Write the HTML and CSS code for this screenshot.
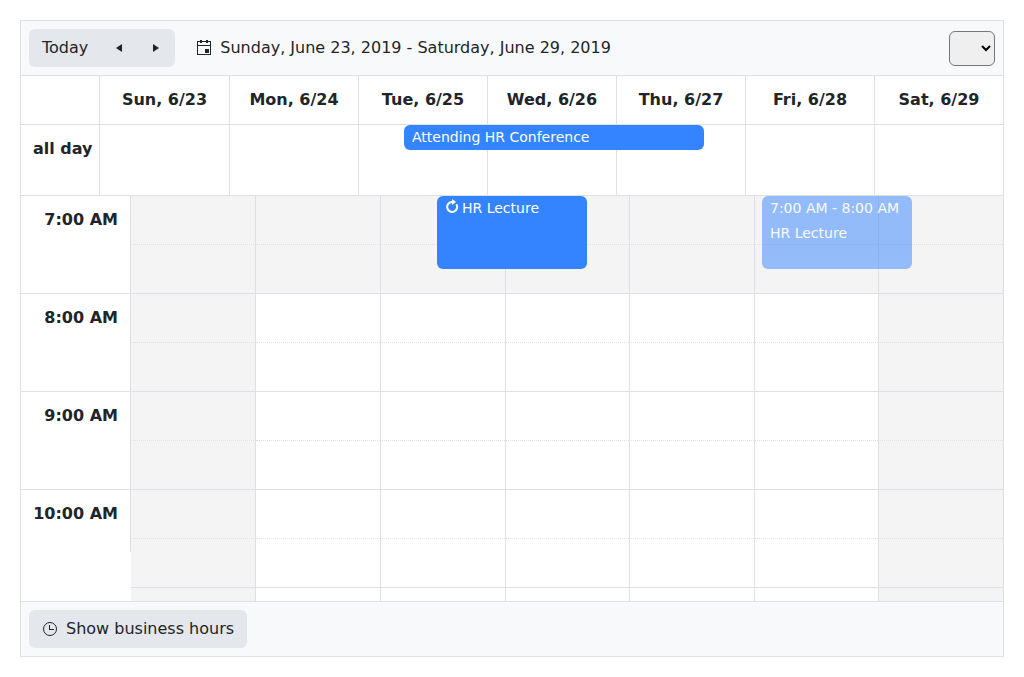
FILE: index.html
```html
<!DOCTYPE html>
<html lang="en">
<head>
<meta charset="utf-8">
<meta name="viewport" content="width=device-width, initial-scale=1">
<title>Scheduler</title>
<link rel="stylesheet" href="styles.css">
</head>
<body>
<main class="scheduler">
  <header class="toolbar">
    <div class="button-group">
      <button class="button" type="button">Today</button>
      <button class="button icon-button" type="button" aria-label="Previous week">
        <svg class="icon" viewBox="0 0 16 16" aria-hidden="true"><path d="M11 4v8L5 8z"/></svg>
      </button>
      <button class="button icon-button" type="button" aria-label="Next week">
        <svg class="icon" viewBox="0 0 16 16" aria-hidden="true"><path d="M5 4v8l6-4z"/></svg>
      </button>
    </div>
    <button class="button date-range" type="button">
      <svg class="icon" viewBox="0 0 16 16" aria-hidden="true"><path fill-rule="evenodd" d="M1 1h3V0h2v1h4V0h2v1h3v14H1zM2 2v3h12V2h-2v1h-2V2H6v1H4V2zM2 6v8h12V6zM9 9h4v4H9z"/></svg>
      <span>Sunday, June 23, 2019 - Saturday, June 29, 2019</span>
    </button>
    <select class="view-select" aria-label="View"></select>
  </header>

  <section class="all-day">
    <table class="day-table">
      <thead>
        <tr><td class="corner"></td><th scope="col">Sun, 6/23</th><th scope="col">Mon, 6/24</th><th scope="col">Tue, 6/25</th><th scope="col">Wed, 6/26</th><th scope="col">Thu, 6/27</th><th scope="col">Fri, 6/28</th><th scope="col">Sat, 6/29</th></tr>
      </thead>
      <tbody>
        <tr class="all-day-row"><th class="corner" scope="row">all day</th><td></td><td></td><td></td><td></td><td></td><td></td><td></td></tr>
      </tbody>
    </table>
    <div class="event event-conference">Attending HR Conference</div>
  </section>

  <section class="times">
    <div class="hours">
      <div class="hour">7:00 AM</div>
      <div class="hour">8:00 AM</div>
      <div class="hour">9:00 AM</div>
      <div class="hour hour-last">10:00 AM</div>
    </div>
    <div class="slots">
      <div class="slot-row closed"><i></i><i></i><i></i><i></i><i></i><i></i><i></i></div>
      <div class="slot-row closed"><i></i><i></i><i></i><i></i><i></i><i></i><i></i></div>
      <div class="slot-row"><i></i><i></i><i></i><i></i><i></i><i></i><i></i></div>
      <div class="slot-row"><i></i><i></i><i></i><i></i><i></i><i></i><i></i></div>
      <div class="slot-row"><i></i><i></i><i></i><i></i><i></i><i></i><i></i></div>
      <div class="slot-row"><i></i><i></i><i></i><i></i><i></i><i></i><i></i></div>
      <div class="slot-row"><i></i><i></i><i></i><i></i><i></i><i></i><i></i></div>
      <div class="slot-row"><i></i><i></i><i></i><i></i><i></i><i></i><i></i></div>
      <div class="slot-row"><i></i><i></i><i></i><i></i><i></i><i></i><i></i></div>
    </div>
    <div class="event event-lecture">
      <svg class="repeat-icon" viewBox="0 0 14 14" aria-hidden="true"><path d="M11.300 5.200A5 5 0 1 1 7 3" fill="none" stroke="currentColor" stroke-width="2"/><path d="M7 0l4 3-4 3z" fill="currentColor"/></svg>
      <span>HR Lecture</span>
    </div>
    <div class="event event-drag">
      <div>7:00 AM - 8:00 AM</div>
      <div>HR Lecture</div>
    </div>
  </section>

  <footer class="toolbar footer">
    <button class="button" type="button">
      <svg class="icon" viewBox="0 0 16 16" aria-hidden="true"><circle cx="8" cy="8" r="6.500" fill="none" stroke="currentColor"/><path d="M7 4h1v4h4v1H7z"/></svg>
      <span>Show business hours</span>
    </button>
  </footer>
</main>
</body>
</html>
```
FILE: styles.css
```css
* { box-sizing: border-box; }

body {
  margin: 20px;
  background: #fff;
  color: #212529;
  font: 16px/24px "DejaVu Sans", sans-serif;
}

.scheduler { border: 1px solid #dee0e6; }

.toolbar {
  display: flex;
  align-items: center;
  gap: 8px;
  padding: 8px;
  background: #f8f9fb;
  border-bottom: 1px solid #dee0e6;
}

.footer {
  border-top: 1px solid #dee0e6;
  border-bottom: 0;
}

.button {
  display: flex;
  align-items: center;
  gap: 8px;
  padding: 6px 12px;
  border: 1px solid transparent;
  border-radius: 6px;
  background: #e4e7eb;
  color: inherit;
  font: inherit;
}

.button-group {
  display: flex;
  border-radius: 6px;
  background: #e4e7eb;
}

.button-group .button { background: transparent; }
.icon-button { width: 38px; margin-left: -1px; justify-content: center; padding: 6px 0; }
.toolbar .date-range { background: transparent; }

.icon {
  flex: none;
  width: 16px;
  height: 16px;
  fill: currentColor;
}

.view-select {
  width: 46px;
  height: 35px;
  margin: 0 0 0 auto;
  border: 1px solid #767676;
  border-radius: 6px;
  background-color: #efefef;
  font: inherit;
}

.all-day, .times { position: relative; }

.day-table {
  width: 100%;
  table-layout: fixed;
  border-spacing: 0;
}

.day-table th, .day-table td {
  padding: 12px 0;
  border-left: 1px solid #dee0e6;
  border-bottom: 1px solid #dee0e6;
  font-weight: bold;
}

.day-table .corner {
  width: 79px;
  padding-left: 12px;
  border-left: 0;
  border-right: 1px solid #dee0e6;
  text-align: left;
  vertical-align: top;
}

.day-table .corner + * { border-left: 0; }
.all-day-row { height: 71px; }

.times {
  display: flex;
  height: 405px;
  overflow: hidden;
}

.hours { width: 110px; }

.hour {
  height: 98px;
  padding: 12px 12px 0 0;
  border-right: 1px solid #dee0e6;
  border-bottom: 1px solid #dee0e6;
  font-weight: bold;
  text-align: right;
}

.hour-last { height: 62px; border-bottom: 0; }
.slots { flex: 1; }

.slot-row {
  display: grid;
  grid-template-columns: repeat(7, 1fr);
  height: 49px;
}

.slot-row i {
  border-left: 1px solid #dee0e6;
  border-bottom: 1px dotted #dee0e6;
}

.slot-row:nth-child(even) i { border-bottom-style: solid; }
.slot-row i:first-child { border-left: 0; border-right: 1px solid #dee0e6; }
.slot-row i:nth-child(2) { border-left: 0; }
.closed i, .slot-row i:first-child, .slot-row i:last-child { background-color: #f4f4f4; }

.event {
  position: absolute;
  padding: 0 8px;
  border-radius: 6px;
  background: #3584ff;
  color: #fff;
  font-size: 14px;
  line-height: 25px;
}

.event-conference { top: 49px; left: 39%; width: 300px; }

.event-lecture {
  display: flex;
  gap: 3px;
  top: 0;
  left: 416px;
  width: 150px;
  height: 73px;
}

.event-drag {
  top: 0;
  left: 741px;
  width: 150px;
  height: 73px;
  opacity: 0.5;
}

.repeat-icon {
  width: 14px;
  height: 14px;
  margin-top: 3px;
}
```
